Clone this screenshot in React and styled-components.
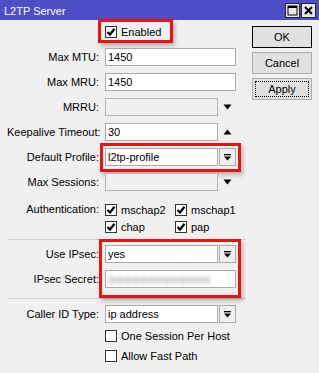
import React from 'react';
import styled, { createGlobalStyle } from 'styled-components';

const Global = createGlobalStyle`
  html, body { margin: 0; padding: 0; background: #f0f0f0; }
  body { font-family: "Liberation Sans", Arial, sans-serif; font-size: 11px; color: #000; }
`;

const Window = styled.div`
  width: 319px;
  height: 373px;
  overflow: hidden;
  background: #f0f0f0;
  position: relative;
`;

const TitleBar = styled.div`
  height: 20px;
  background: #4d4dc8;
  color: #fff;
  display: flex;
  align-items: center;
  justify-content: space-between;
  padding: 2px 3px 0 4px;
  box-sizing: border-box;
  font-size: 11px;
`;

const WinButtons = styled.div`
  display: flex;
  gap: 1px;
  margin-top: -2px;
`;

const WinButton = styled.div`
  width: 15px;
  height: 15px;
  box-sizing: border-box;
  border: 1px solid #222;
  background: #e8e8e8;
  display: flex;
  align-items: center;
  justify-content: center;
`;

const Body = styled.div`
  display: flex;
`;

const FormCol = styled.div`
  width: 246px;
  padding: 3px 0 0 7px;
  box-sizing: border-box;
  display: flex;
  flex-direction: column;
`;

const Row = styled.div`
  display: grid;
  grid-template-columns: 92px 1fr;
  column-gap: 6px;
  height: ${p => p.$h || 18}px;
  margin-top: ${p => p.$mt ?? 7}px;
  align-items: center;
`;

const Label = styled.div`
  text-align: right;
  white-space: nowrap;
`;

const Cell = styled.div`
  position: relative;
  display: flex;
  align-items: center;
  height: 100%;
`;

const Input = styled.div`
  width: ${p => p.$w || 131}px;
  height: 18px;
  box-sizing: border-box;
  border: 1px solid ${p => (p.$disabled ? '#b4b4b4' : '#a9a9a9')};
  background: ${p => (p.$disabled ? '#f0f0f0' : '#fff')};
  padding-left: 2px;
  display: flex;
  align-items: center;
  overflow: hidden;
  white-space: nowrap;
`;

const DropButton = styled.div`
  width: 17px;
  height: 18px;
  margin-left: 1px;
  box-sizing: border-box;
  border: 1px solid #a9a9a9;
  background: #f0f0f0;
  display: flex;
  align-items: center;
  justify-content: center;
`;

const ArrowSlot = styled.div`
  width: 18px;
  height: 18px;
  display: flex;
  align-items: center;
  justify-content: center;
`;

const Secret = styled.span`
  color: #cacaca;
  filter: blur(2px);
  font-size: 13px;
`;

const CheckWrap = styled.label`
  display: flex;
  align-items: center;
  gap: 4px;
  white-space: nowrap;
`;

const Box = styled.span`
  width: 12px;
  height: 12px;
  box-sizing: border-box;
  border: 1px solid #333;
  background: #fff;
  display: inline-flex;
  align-items: center;
  justify-content: center;
`;

const CheckGrid = styled.div`
  display: grid;
  grid-template-columns: 70px 1fr;
  grid-auto-rows: 17px;
  align-items: center;
`;

const AuthRow = styled.div`
  display: grid;
  grid-template-columns: 92px 1fr;
  column-gap: 6px;
  margin-top: 10px;
  align-items: start;
`;

const AuthLabel = styled(Label)`
  line-height: 17px;
`;

const Separator = styled.div`
  height: 1px;
  background: #d2d2d2;
  margin-top: ${p => p.$mt}px;
`;

const Highlight = styled.span`
  position: absolute;
  left: ${p => p.$l}px;
  top: ${p => p.$t}px;
  width: ${p => p.$w}px;
  height: ${p => p.$h}px;
  border: 3px solid #ee1111;
  box-sizing: border-box;
  box-shadow: 2px 3px 4px rgba(0, 0, 0, 0.25);
  pointer-events: none;
`;

const Stack = styled.div`
  position: relative;
  display: flex;
  flex-direction: column;
`;

const ButtonCol = styled.div`
  display: flex;
  flex-direction: column;
  gap: 4px;
  padding: 6px 0 0 6px;
`;

const Button = styled.div`
  width: 60px;
  height: 22px;
  box-sizing: border-box;
  border: 1px solid ${p => (p.$default ? '#000' : '#adadad')};
  background: #e1e1e1;
  display: flex;
  align-items: center;
  justify-content: center;
  position: relative;
  color: #000;
  &::after {
    content: '';
    display: ${p => (p.$focus ? 'block' : 'none')};
    position: absolute;
    inset: 2px;
    border: 1px dotted #000;
  }
`;

const CheckMark = () => (
  <svg width="10" height="10" viewBox="0 0 10 10">
    <path d="M1.5 5 L4 7.5 L8.5 1.8" fill="none" stroke="#000" strokeWidth="2.2" />
  </svg>
);

const Check = ({ checked, children }) => (
  <CheckWrap>
    <Box>{checked && <CheckMark />}</Box>
    {children}
  </CheckWrap>
);

const DropIcon = () => (
  <svg width="9" height="9" viewBox="0 0 9 9">
    <rect x="1" y="1" width="7" height="1.3" fill="#000" />
    <polygon points="1,3.5 8,3.5 4.5,7.5" fill="#000" />
  </svg>
);

const Triangle = ({ up }) => (
  <svg width="9" height="6" viewBox="0 0 9 6">
    <polygon points={up ? '0.5,5.5 8.5,5.5 4.5,0.5' : '0.5,0.5 8.5,0.5 4.5,5.5'} fill="#000" />
  </svg>
);

const Combo = ({ value }) => (
  <>
    <Input $w={113}>{value}</Input>
    <DropButton><DropIcon /></DropButton>
  </>
);

export default function App() {
  return (
    <Window>
      <Global />
      <TitleBar>
        <span>L2TP Server</span>
        <WinButtons>
          <WinButton>
            <svg width="11" height="11" viewBox="0 0 11 11">
              <rect x="1" y="1" width="9" height="9" fill="none" stroke="#000" strokeWidth="1" />
              <rect x="1" y="1" width="9" height="2" fill="#000" />
            </svg>
          </WinButton>
          <WinButton>
            <svg width="11" height="11" viewBox="0 0 11 11">
              <path d="M2 2 L9 9 M9 2 L2 9" stroke="#000" strokeWidth="2" />
            </svg>
          </WinButton>
        </WinButtons>
      </TitleBar>
      <Body>
        <FormCol>
          <Row $mt={0}>
            <Label />
            <Cell>
              <Check checked>Enabled</Check>
              <Highlight $l={-7} $t={-4} $w={75} $h={24} />
            </Cell>
          </Row>
          <Row>
            <Label>Max MTU:</Label>
            <Cell><Input>1450</Input></Cell>
          </Row>
          <Row>
            <Label>Max MRU:</Label>
            <Cell><Input>1450</Input></Cell>
          </Row>
          <Row>
            <Label>MRRU:</Label>
            <Cell>
              <Input $w={113} $disabled />
              <ArrowSlot><Triangle /></ArrowSlot>
            </Cell>
          </Row>
          <Row>
            <Label>Keepalive Timeout:</Label>
            <Cell>
              <Input $w={113}>30</Input>
              <ArrowSlot><Triangle up /></ArrowSlot>
            </Cell>
          </Row>
          <Row>
            <Label>Default Profile:</Label>
            <Cell>
              <Combo value="l2tp-profile" />
              <Highlight $l={-5} $t={-5} $w={141} $h={29} />
            </Cell>
          </Row>
          <Row>
            <Label>Max Sessions:</Label>
            <Cell>
              <Input $w={113} $disabled />
              <ArrowSlot><Triangle /></ArrowSlot>
            </Cell>
          </Row>
          <AuthRow>
            <AuthLabel>Authentication:</AuthLabel>
            <CheckGrid>
              <Check checked>mschap2</Check>
              <Check checked>mschap1</Check>
              <Check checked>chap</Check>
              <Check checked>pap</Check>
            </CheckGrid>
          </AuthRow>
          <Separator $mt={4} />
          <Stack>
            <Row $mt={5}>
              <Label>Use IPsec:</Label>
              <Cell><Combo value="yes" /></Cell>
            </Row>
            <Row>
              <Label>IPsec Secret:</Label>
              <Cell>
                <Input><Secret>■■■■■■■■■■■■■</Secret></Input>
              </Cell>
            </Row>
            <Highlight $l={92} $t={-1} $w={142} $h={59} />
          </Stack>
          <Separator $mt={10} />
          <Row $mt={6}>
            <Label>Caller ID Type:</Label>
            <Cell><Combo value="ip address" /></Cell>
          </Row>
          <Row $mt={5} $h={16}>
            <Label />
            <Cell><Check>One Session Per Host</Check></Cell>
          </Row>
          <Row $mt={4} $h={16}>
            <Label />
            <Cell><Check>Allow Fast Path</Check></Cell>
          </Row>
        </FormCol>
        <ButtonCol>
          <Button $default>OK</Button>
          <Button>Cancel</Button>
          <Button $focus>Apply</Button>
        </ButtonCol>
      </Body>
    </Window>
  );
}
